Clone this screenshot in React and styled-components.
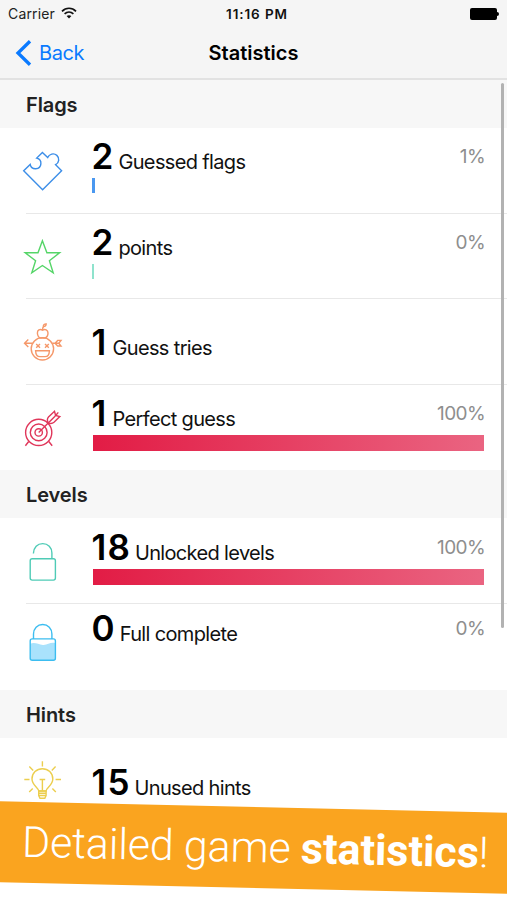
import styled, { createGlobalStyle } from "styled-components";

const sections = [
    {
        title: "Flags",
        rows: [
            { icon: <PuzzleIcon />, value: 2, label: "Guessed flags", percent: 1, color: "#4a98f0", top: 10 },
            { icon: <StarIcon />, value: 2, label: "points", percent: 0, color: "#8fe3cd", top: 10 },
            { icon: <ArcherIcon />, value: 1, label: "Guess tries", top: 25 },
            { icon: <TargetIcon />, value: 1, label: "Perfect guess", percent: 100, top: 10 },
        ],
    },
    {
        title: "Levels",
        rows: [
            { icon: <OpenLockIcon />, value: 18, label: "Unlocked levels", percent: 100, top: 10.5 },
            { icon: <LockIcon />, value: 0, label: "Full complete", percent: 0, top: 6 },
        ],
    },
    {
        title: "Hints",
        rows: [
            { icon: <BulbIcon />, value: 15, label: "Unused hints", top: 26 },
        ],
    },
];

export default function App() {
    return (
        <Screen>
            <GlobalStyle />
            <StatusBar>
                <Carrier>
                    Carrier
                    <WifiIcon />
                </Carrier>
                <Clock>11:16 PM</Clock>
                <Battery><span /></Battery>
            </StatusBar>
            <NavBar>
                <BackButton>
                    <svg width="17" height="26" viewBox="0 0 17 26" fill="none" stroke="#0a7aff" strokeWidth="3.3">
                        <path d="M15 1.2L3 13L15 24.8" />
                    </svg>
                    Back
                </BackButton>
                <Title>Statistics</Title>
                <span />
            </NavBar>
            {sections.map(section => (
                <section key={section.title}>
                    <SectionTitle>{section.title}</SectionTitle>
                    {section.rows.map(row => <StatRow key={row.label} {...row} />)}
                </section>
            ))}
            <ScrollThumb />
            <Banner>
                <p>Detailed game <strong>statistics</strong>!</p>
            </Banner>
        </Screen>
    );
}

function StatRow({ icon, value, label, percent, color, top }) {
    return (
        <Row>
            <IconBox>{icon}</IconBox>
            <RowContent $top={top}>
                <RowText>
                    <Value>{value}</Value>
                    <Label>{label}</Label>
                    {percent !== undefined && <Percent>{percent}%</Percent>}
                </RowText>
                {percent === 100 && <FullBar />}
                {color && <SmallBar $color={color} $width={percent > 0 ? 3 : 2} />}
            </RowContent>
        </Row>
    );
}

function WifiIcon() {
    return (
        <svg width="16" height="12" viewBox="0 0 16 12" fill="none" stroke="#111" strokeWidth="1.7">
            <path d="M1 4.3C5 0.2 11 0.2 15 4.3" />
            <path d="M3.6 6.9C6.2 4.4 9.8 4.4 12.4 6.9" />
            <path d="M8 11.6L5.6 9.1C7 7.8 9 7.8 10.4 9.1Z" fill="#111" stroke="none" />
        </svg>
    );
}

function PuzzleIcon() {
    return (
        <Icon viewBox="0 0 46 46" stroke="#3c8ee8">
            <path d="M3.7 22.8L10.2 16.4A5.4 5.4 0 1 0 16.7 10.1L22.4 4.4L27.7 9.6A5.7 5.7 0 1 1 35.6 16.7L41.6 22.8L22.6 41.7Z" />
        </Icon>
    );
}

function StarIcon() {
    return (
        <Icon viewBox="0 0 46 46" stroke="#55d568">
            <path d="M22.4 7.8L26.9 19.8H39.6L29.4 27.7L33.2 39.8L22.4 32.5L11.8 39.8L15.6 27.7L5.2 19.8H18Z" />
        </Icon>
    );
}

function ArcherIcon() {
    return (
        <Icon viewBox="0 0 46 46" stroke="#f5986a">
            <circle cx="22.4" cy="29.8" r="11.2" />
            <path d="M22.6 11.2C19.8 9.3 17.2 11.3 17.4 14.2C17.6 17 19.5 18.7 20.6 19H24.8C26.2 18.5 28 16.5 28 13.9C28 11 25 9.5 22.6 11.2Z" />
            <path d="M22.6 11.2C22.4 9.5 22.8 8 24 7.1M23.3 7.6C23.3 5.5 24.5 4.8 26.2 4.9C26.1 6.8 25 7.8 23.3 7.6Z" />
            <path d="M8.3 20.5L4.5 24.2L8.3 28M4.5 24.2H12.2M32.5 24.2H39.6M35 24.2L37.7 21.4H41L38.8 24.2L41 27H37.7Z" />
            <path d="M16.2 25L20 28.8M20 25L16.2 28.8M25 25L28.8 28.8M28.8 25L25 28.8" />
            <path d="M15.6 31.7H29.4C29.3 35.6 27.8 37.6 25 37.6H20C17.2 37.6 15.7 35.6 15.6 31.7Z" />
        </Icon>
    );
}

function TargetIcon() {
    return (
        <Icon viewBox="0 0 46 46" stroke="#e0365a">
            <circle cx="18.7" cy="27.4" r="13.1" />
            <circle cx="18.7" cy="27.4" r="8.4" />
            <circle cx="18.7" cy="27.4" r="3.7" />
            <path d="M18.7 27.4L35 11.2M8.7 36.5L5.4 40.8M28.8 36.5L32.2 40.8" />
            <path d="M28.2 17.8C27 15.5 27.2 13.5 28.5 12L34.5 6.3L35.6 10.4L39.8 11.5L34 17.3C32.3 18.7 30.2 18.8 28.2 17.8Z" />
            <path d="M35 11.2L38.3 7.4" />
        </Icon>
    );
}

function OpenLockIcon() {
    return (
        <Icon viewBox="0 0 46 46" stroke="#4fcbb6">
            <rect x="10.2" y="20.7" width="25.2" height="21.4" rx="2" />
            <path d="M13.4 15.5C13.6 9.5 17.5 5.6 22.7 5.6C28 5.6 31.9 9.6 31.9 15V20.7" />
        </Icon>
    );
}

function LockIcon() {
    return (
        <Icon viewBox="0 0 46 46" stroke="#3cbdf0">
            <path d="M10.2 19.7C15 17.8 18 20.5 23 21C27.5 21.4 31 17.5 35.4 19.3V36H10.2Z" fill="#a9e2fc" stroke="none" />
            <rect x="10.2" y="14.9" width="25.2" height="21.3" rx="2" />
            <path d="M13.5 14.9V10C13.5 4.5 17.4 0.5 22.7 0.5C28 0.5 31.9 4.5 31.9 10V14.9" />
        </Icon>
    );
}

function BulbIcon() {
    return (
        <Icon viewBox="0 0 46 46" stroke="#ecce4e">
            <path d="M18.7 34C18.7 30.5 12 28.5 12 22C12 16 16.6 11.7 22.4 11.7C28.2 11.7 32.8 16 32.8 22C32.8 28.5 26.1 30.5 26.1 34Z" />
            <path d="M18.7 34H26.1V38.5L24.8 41.2H20L18.7 38.5ZM18.7 36.2H26.1M18.8 38.5H26M22.4 34V22.5M19.6 22.5H25.2" />
            <path d="M22.4 4.3V9.5M4.3 22.5H9.5M35.6 22.5H41M9.3 9.6L13.2 13.4M35.6 9.6L31.8 13.4M9.2 35L12.7 31.6M35.8 35L32.4 31.6" />
        </Icon>
    );
}

const GlobalStyle = createGlobalStyle`
    * {
        box-sizing: border-box;
        margin: 0;
        padding: 0;
    }
    body {
        background-color: #fff;
        color: #111;
        font-family: Inter, "Liberation Sans", sans-serif;
        overflow: hidden;
    }
`;

const Screen = styled.div`
    position: relative;
    width: 507px;
    height: 900px;
    overflow: hidden;
`;

const StatusBar = styled.div`
    height: 27px;
    background-color: #f5f5f5;
    display: grid;
    grid-template-columns: 1fr auto 1fr;
    align-items: center;
    padding: 0 8px;
`;

const Carrier = styled.div`
    display: flex;
    align-items: center;
    gap: 6px;
    font-size: 14px;
    letter-spacing: 0.15px;
    color: #222;
    svg {
        margin-top: -1px;
    }
`;

const Clock = styled.p`
    font-size: 13.5px;
    font-weight: 600;
    letter-spacing: 0.9px;
    margin-left: 7px;
`;

const Battery = styled.div`
    justify-self: end;
    display: flex;
    align-items: center;
    span {
        width: 27px;
        height: 12px;
        border-radius: 2px;
        background-color: #000;
    }
    &::after {
        content: "";
        width: 2px;
        height: 4px;
        border-radius: 0 2px 2px 0;
        background-color: #000;
    }
`;

const NavBar = styled.div`
    height: 53px;
    background-color: #f5f5f5;
    border-bottom: 2px solid #e2e2e2;
    display: grid;
    grid-template-columns: 1fr auto 1fr;
    align-items: center;
    padding: 0 15px;
`;

const BackButton = styled.div`
    display: flex;
    align-items: center;
    gap: 7px;
    font-size: 20px;
    letter-spacing: -0.4px;
    color: #0a7aff;
`;

const Title = styled.h1`
    font-size: 20px;
    font-weight: 600;
    color: #000;
`;

const SectionTitle = styled.h2`
    height: 48px;
    padding: 1px 26px 0 26px;
    background-color: #f7f7f7;
    font-size: 20px;
    font-weight: 600;
    line-height: 48px;
    letter-spacing: -0.1px;
    color: #222;
`;

const Row = styled.div`
    height: 85.6px;
    display: flex;
    align-items: center;
    padding-left: 20px;
    background: linear-gradient(#e8e8e8, #e8e8e8) 26px 100% / 100% 1px no-repeat;
    &:last-child {
        background: none;
    }
`;

const IconBox = styled.div`
    width: 72px;
    height: 46px;
`;

const Icon = styled.svg`
    display: block;
    width: 46px;
    height: 46px;
    overflow: visible;
    fill: none;
    stroke-width: 1.4px;
`;

const RowContent = styled.div`
    flex: 1;
    align-self: stretch;
    padding: ${props => props.$top}px 23px 0 0;
`;

const RowText = styled.div`
    height: 36px;
    display: flex;
    align-items: baseline;
    line-height: 36px;
`;

const Value = styled.strong`
    min-width: 17px;
    margin: 0 4px 0 -0.5px;
    font-size: 35px;
    font-weight: 600;
    letter-spacing: 1.1px;
    color: #000;
`;

const Label = styled.p`
    font-size: 20px;
    letter-spacing: -0.65px;
`;

const Percent = styled.p`
    align-self: flex-start;
    margin: 1px -1px 0 auto;
    font-size: 19px;
    letter-spacing: -0.6px;
    color: #8e8e8e;
`;

const FullBar = styled.div`
    height: 16px;
    margin: 4px 0 0 1px;
    background: linear-gradient(90deg, #e21c45, #ea6481);
`;

const SmallBar = styled.div`
    width: ${props => props.$width}px;
    height: 15px;
    margin-top: 4px;
    background-color: ${props => props.$color};
`;

const ScrollThumb = styled.div`
    position: absolute;
    top: 83px;
    right: 3px;
    width: 3px;
    height: 545px;
    border-radius: 2px;
    background-color: #b2b2b2;
`;

const Banner = styled.div`
    position: absolute;
    top: 807px;
    left: -10px;
    right: -10px;
    height: 80.5px;
    padding-left: 32px;
    background-color: #faa41f;
    box-shadow: 0 60px 0 #fff;
    transform: rotate(1.32deg);
    p {
        font-family: Roboto, sans-serif;
        font-size: 43px;
        font-weight: 300;
        line-height: 81px;
        letter-spacing: -0.15px;
        color: #fff;
        white-space: nowrap;
    }
    strong {
        font-weight: 700;
        letter-spacing: 0;
    }
`;
